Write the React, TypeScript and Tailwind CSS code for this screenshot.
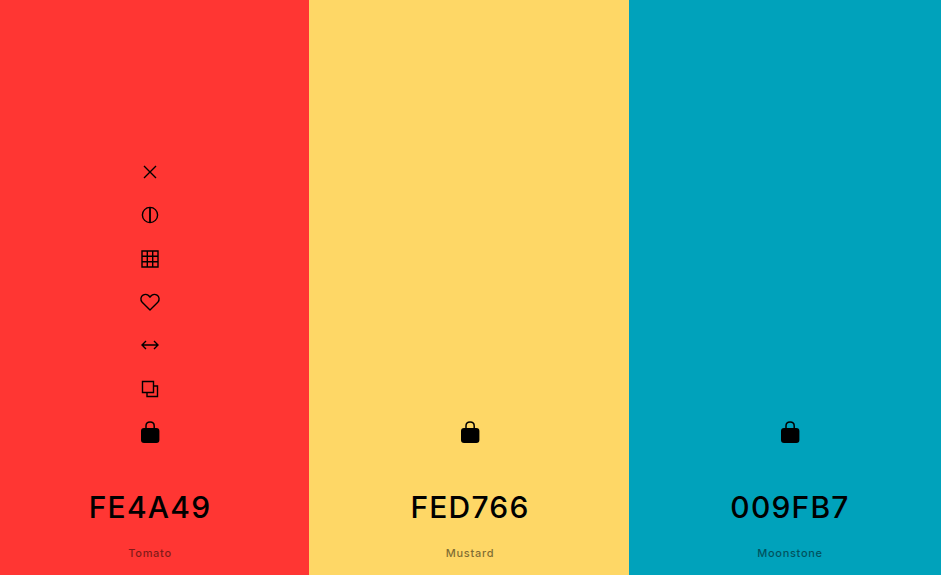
import React from "react";

const S = "w-[22px] h-[22px]";
const stroke = { fill: "none", stroke: "currentColor", strokeWidth: 1.4 };

const Tools = () => (
  <>
    <svg viewBox="0 0 22 22" className={S} {...stroke}><path d="M5 5 L17 17 M17 5 L5 17" /></svg>
    <svg viewBox="0 0 22 22" className={S} {...stroke}><circle cx="11" cy="11" r="7.6" /><path d="M11 3.5 V18.5" strokeWidth="1.8" /></svg>
    <svg viewBox="0 0 22 22" className={S} {...stroke}><path d="M3 3 H19 V19 H3 Z M8.3 3 V19 M13.7 3 V19 M3 8.3 H19 M3 13.7 H19" /></svg>
    <svg viewBox="0 0 22 22" className={S} {...stroke}><path d="M11 19 L3.2 11.3 C1 8.8 1.8 5.4 4 4.1 C6.7 2.6 9.6 3.8 11 6.2 C12.4 3.8 15.3 2.6 18 4.1 C20.2 5.4 21 8.8 18.8 11.3 Z" strokeLinejoin="round" /></svg>
    <svg viewBox="0 0 22 22" className={S} {...stroke}><path d="M3 11 H19 M7 7 L3 11 L7 15 M15 7 L19 11 L15 15" /></svg>
    <svg viewBox="0 0 22 22" className={S} {...stroke}><path d="M3.5 3.5 H14.5 V14.5 H3.5 Z M14.5 8 H18.5 V18.5 H8 V14.5" /></svg>
  </>
);

const Lock = () => (
  <svg viewBox="0 0 22 22" className={S}>
    <path d="M7 9 V5 C7 -0.2 15.2 -0.2 15.2 5 V9" fill="none" stroke="currentColor" strokeWidth="1.5" />
    <rect x="2" y="7" width="18.4" height="15" rx="3" fill="currentColor" />
  </svg>
);

const Column = ({ bg, hex, name, tools }: { bg: string; hex: string; name: string; tools?: boolean }) => (
  <div className={`${bg} w-[320px] h-full shrink-0 pl-[2px] flex flex-col items-center justify-end text-black`}>
    <div className="flex flex-col items-center gap-[21.33px]">
      {tools && <Tools />}
      <Lock />
    </div>
    <div className="mt-[46px] text-[30px] leading-[36px] font-medium tracking-[1.2px]">{hex}</div>
    <div className="mt-[20px] mb-[14px] text-[11px] leading-[16px] font-medium tracking-[0.7px] opacity-50">{name}</div>
  </div>
);

export default function App() {
  return (
    <div className="w-[941px] h-[575px] overflow-hidden font-['Inter',sans-serif]">
      <div className="flex h-full -ml-[11px]">
        <Column bg="bg-[#ff3633]" hex="FE4A49" name="Tomato" tools />
        <Column bg="bg-[#fed766]" hex="FED766" name="Mustard" />
        <Column bg="bg-[#00a2bb]" hex="009FB7" name="Moonstone" />
      </div>
    </div>
  );
}
